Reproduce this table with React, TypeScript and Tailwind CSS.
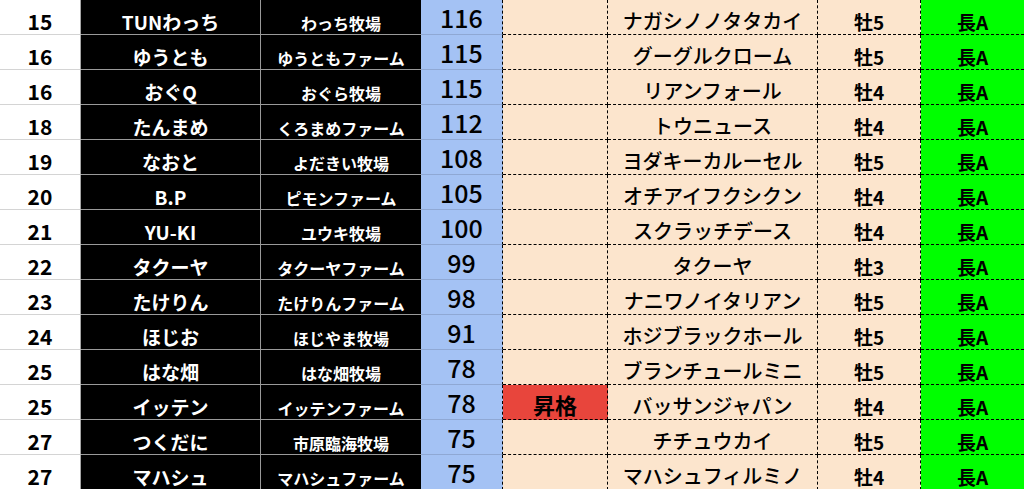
import React from "react";

type Row = {
  rank: number;
  owner: string;
  farm: string;
  score: number;
  note?: string;
  horse: string;
  sex: string;
  grade: string;
};

const rows: Row[] = [
  { rank: 15, owner: "TUNわっち", farm: "わっち牧場", score: 116, horse: "ナガシノノタタカイ", sex: "牡5", grade: "長A" },
  { rank: 16, owner: "ゆうとも", farm: "ゆうともファーム", score: 115, horse: "グーグルクローム", sex: "牡5", grade: "長A" },
  { rank: 16, owner: "おぐQ", farm: "おぐら牧場", score: 115, horse: "リアンフォール", sex: "牡4", grade: "長A" },
  { rank: 18, owner: "たんまめ", farm: "くろまめファーム", score: 112, horse: "トウニュース", sex: "牡4", grade: "長A" },
  { rank: 19, owner: "なおと", farm: "よだきい牧場", score: 108, horse: "ヨダキーカルーセル", sex: "牡5", grade: "長A" },
  { rank: 20, owner: "B.P", farm: "ピモンファーム", score: 105, horse: "オチアイフクシクン", sex: "牡4", grade: "長A" },
  { rank: 21, owner: "YU-KI", farm: "ユウキ牧場", score: 100, horse: "スクラッチデース", sex: "牡4", grade: "長A" },
  { rank: 22, owner: "タクーヤ", farm: "タクーヤファーム", score: 99, horse: "タクーヤ", sex: "牡3", grade: "長A" },
  { rank: 23, owner: "たけりん", farm: "たけりんファーム", score: 98, horse: "ナニワノイタリアン", sex: "牡5", grade: "長A" },
  { rank: 24, owner: "ほじお", farm: "ほじやま牧場", score: 91, horse: "ホジブラックホール", sex: "牡5", grade: "長A" },
  { rank: 25, owner: "はな畑", farm: "はな畑牧場", score: 78, horse: "ブランチュールミニ", sex: "牡5", grade: "長A" },
  { rank: 25, owner: "イッテン", farm: "イッテンファーム", score: 78, note: "昇格", horse: "バッサンジャパン", sex: "牡4", grade: "長A" },
  { rank: 27, owner: "つくだに", farm: "市原臨海牧場", score: 75, horse: "チチュウカイ", sex: "牡5", grade: "長A" },
  { rank: 27, owner: "マハシュ", farm: "マハシュファーム", score: 75, horse: "マハシュフィルミノ", sex: "牡4", grade: "長A" },
];

const font = "font-['Meiryo_UI','Noto_Sans_CJK_JP',sans-serif]";

function TableRow({ r }: { r: Row }) {
  return (
    <div className="flex h-[35px] leading-none">
      <div className="flex w-[81px] items-center justify-center border-r border-b border-r-[#a6a6a6] border-b-[#d4d4d4] bg-white pt-[8px] text-[21px] font-bold text-black">
        {r.rank}
      </div>
      <div className="flex w-[180px] items-center justify-center border-r border-b border-[#9a9a9a] bg-black pt-[8px] text-[19px] font-bold text-white">
        {r.owner}
      </div>
      <div className="flex w-[160px] items-center justify-center border-b border-[#9a9a9a] bg-black pt-[12px] text-[16px] font-bold text-white">
        {r.farm}
      </div>
      <div className="flex w-[82px] items-center justify-center border-b border-r border-b-[#8fa8d4] border-r-black bg-[#a4c2f4] pt-[1px] text-[25px] font-medium text-black [border-right-style:dashed]">
        {r.score}
      </div>
      <div
        className={
          r.note
            ? "flex w-[105px] items-center justify-center border-r border-b border-dashed border-black bg-[#e8453c] pt-[4px] text-[22px] font-bold text-black"
            : "flex w-[105px] items-center justify-center border-r border-b border-dashed border-black bg-[#fce5cd]"
        }
      >
        {r.note}
      </div>
      <div className="flex w-[210px] items-center justify-center border-r border-b border-dashed border-black bg-[#fce5cd] pt-[8px] text-[20px] font-medium text-black">
        {r.horse}
      </div>
      <div className="flex w-[103px] items-center justify-center border-r border-b border-dashed border-black bg-[#fce5cd] pt-[8px] text-[19px] font-bold text-black">
        {r.sex}
      </div>
      <div className="flex w-[103px] items-center justify-center border-b border-dashed border-black bg-[#00ff00] pt-[8px] text-[19px] font-bold text-black">
        {r.grade}
      </div>
    </div>
  );
}

export default function App() {
  return (
    <div className={`h-[489px] w-[1024px] overflow-hidden bg-white ${font}`}>
      {rows.map((r, i) => (
        <TableRow key={i} r={r} />
      ))}
    </div>
  );
}
